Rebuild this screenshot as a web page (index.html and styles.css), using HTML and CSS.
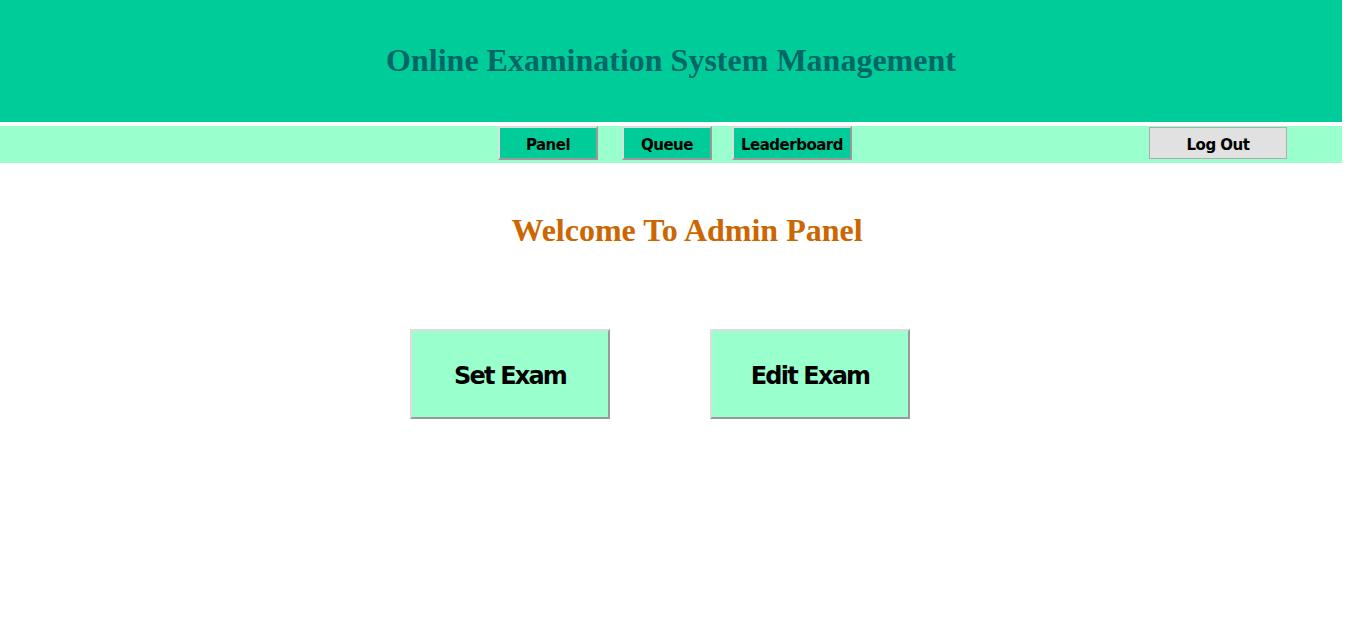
FILE: index.html
```html
<!DOCTYPE html>
<html>
<head>
<meta charset="utf-8">
<title>Admin Panel</title>
<link rel="stylesheet" href="styles.css">
</head>
<body>
<header class="header">
  <h1 class="title">Online Examination System Management</h1>
</header>
<nav class="nav">
  <button class="nav-btn btn-panel">Panel</button>
  <button class="nav-btn btn-queue">Queue</button>
  <button class="nav-btn btn-leader">Leaderboard</button>
  <button class="logout">Log Out</button>
</nav>
<main class="main">
  <h2 class="welcome">Welcome To Admin Panel</h2>
  <div class="actions">
    <button class="big-btn">Set Exam</button>
    <button class="big-btn">Edit Exam</button>
  </div>
</main>
</body>
</html>
```
FILE: styles.css
```css
html, body {
  margin: 0;
  padding: 0;
  background: #ffffff;
}

.header {
  width: 1342px;
  height: 122px;
  background: #00cc99;
  display: flex;
  align-items: center;
  justify-content: center;
}

.title {
  margin: 0 0 2px 0;
  font-family: "Liberation Serif", "Times New Roman", serif;
  font-weight: bold;
  font-size: 32px;
  color: #006666;
}

.nav {
  width: 1342px;
  height: 37px;
  margin-top: 4px;
  background: #99ffcc;
  display: flex;
  align-items: flex-start;
  box-sizing: border-box;
  padding: 0 55px 0 498px;
}

.nav-btn,
.logout {
  font-family: "DejaVu Sans", Verdana, sans-serif;
  font-weight: bold;
  font-size: 15px;
  letter-spacing: -0.5px;
  color: #000000;
  padding: 3px 0 0 0;
  cursor: pointer;
}

.nav-btn {
  height: 34px;
  background: #00cc99;
  border: 2px solid;
  border-color: #dddddd #999999 #999999 #dddddd;
}

.btn-panel { width: 100px; margin-right: 24px; }
.btn-queue { width: 90px; margin-right: 20px; }
.btn-leader { width: 120px; }

.logout {
  margin-left: auto;
  margin-top: 1px;
  width: 138px;
  height: 32px;
  background: #e1e1e1;
  border: 1px solid #adadad;
}

.main {
  width: 1342px;
}

.welcome {
  margin: 49px 0 0 0;
  padding-left: 32px;
  text-align: center;
  font-family: "Liberation Serif", "Times New Roman", serif;
  font-weight: bold;
  font-size: 32px;
  color: #cc6600;
}

.actions {
  display: flex;
  gap: 100px;
  padding-left: 410px;
  margin-top: 80px;
}

.big-btn {
  width: 200px;
  height: 90px;
  background: #99ffcc;
  border: 2px solid;
  border-color: #dddddd #999999 #999999 #dddddd;
  font-family: "DejaVu Sans", Verdana, sans-serif;
  font-weight: bold;
  font-size: 24px;
  letter-spacing: -1.8px;
  color: #000000;
  padding: 4px 0 0 0;
  cursor: pointer;
}
```
